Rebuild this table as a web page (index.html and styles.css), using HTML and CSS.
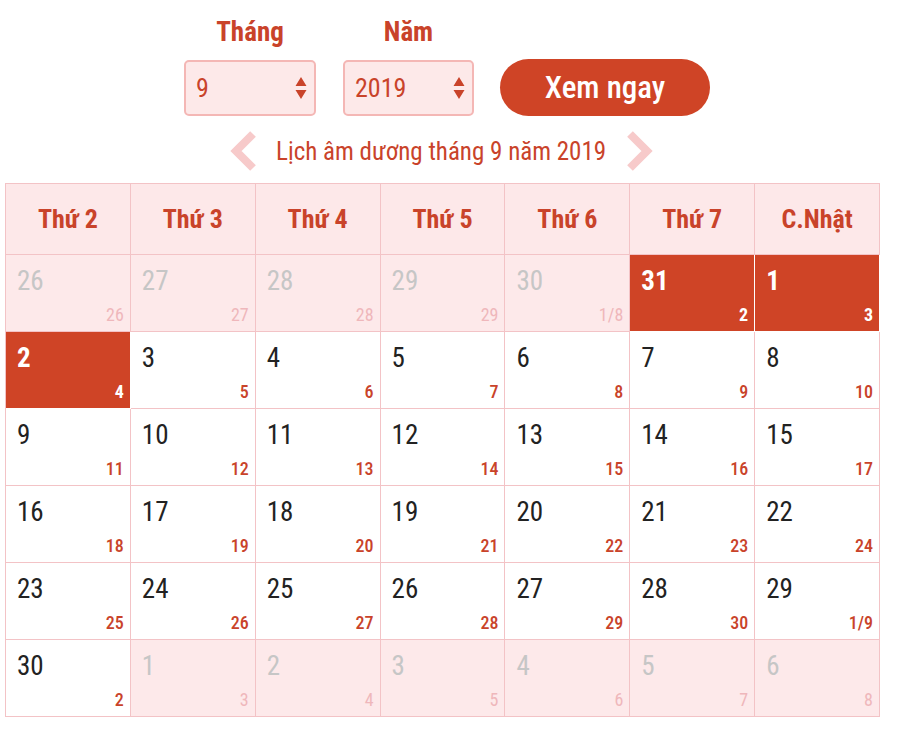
FILE: index.html
```html
<!DOCTYPE html>
<html lang="vi">
<head>
<meta charset="utf-8">
<link rel="stylesheet" href="styles.css">
</head>
<body>
<div class="page">
  <div class="controls">
    <div class="field">
      <div class="label">Tháng</div>
      <div class="select sel-month"><span>9</span>
        <svg class="spin" width="12" height="24" viewBox="0 0 12 24"><path d="M6 1 L11.5 10 H0.5 Z M6 23 L11.5 14 H0.5 Z" fill="#c9432a"/></svg>
      </div>
    </div>
    <div class="field">
      <div class="label">Năm</div>
      <div class="select sel-year"><span>2019</span>
        <svg class="spin" width="12" height="24" viewBox="0 0 12 24"><path d="M6 1 L11.5 10 H0.5 Z M6 23 L11.5 14 H0.5 Z" fill="#c9432a"/></svg>
      </div>
    </div>
    <div class="btn">Xem ngay</div>
  </div>
  <div class="titlebar">
    <svg class="chev" width="34" height="42" viewBox="0 0 34 42"><polyline points="27,4 10,21 27,38" fill="none" stroke="#f7caca" stroke-width="8"/></svg>
    <div class="title">Lịch âm dương tháng 9 năm 2019</div>
    <svg class="chev" width="34" height="42" viewBox="0 0 34 42"><polyline points="7,4 24,21 7,38" fill="none" stroke="#f7caca" stroke-width="8"/></svg>
  </div>
  <div class="cal">
    <div class="hd">Thứ 2</div><div class="hd">Thứ 3</div><div class="hd">Thứ 4</div><div class="hd">Thứ 5</div><div class="hd">Thứ 6</div><div class="hd">Thứ 7</div><div class="hd">C.Nhật</div>

    <div class="c off"><span class="d">26</span><span class="l">26</span></div>
    <div class="c off"><span class="d">27</span><span class="l">27</span></div>
    <div class="c off"><span class="d">28</span><span class="l">28</span></div>
    <div class="c off"><span class="d">29</span><span class="l">29</span></div>
    <div class="c off"><span class="d">30</span><span class="l">1/8</span></div>
    <div class="c hot"><span class="d">31</span><span class="l">2</span></div>
    <div class="c hot"><span class="d">1</span><span class="l">3</span></div>

    <div class="c hot"><span class="d">2</span><span class="l">4</span></div>
    <div class="c"><span class="d">3</span><span class="l">5</span></div>
    <div class="c"><span class="d">4</span><span class="l">6</span></div>
    <div class="c"><span class="d">5</span><span class="l">7</span></div>
    <div class="c"><span class="d">6</span><span class="l">8</span></div>
    <div class="c"><span class="d">7</span><span class="l">9</span></div>
    <div class="c"><span class="d">8</span><span class="l">10</span></div>

    <div class="c"><span class="d">9</span><span class="l">11</span></div>
    <div class="c"><span class="d">10</span><span class="l">12</span></div>
    <div class="c"><span class="d">11</span><span class="l">13</span></div>
    <div class="c"><span class="d">12</span><span class="l">14</span></div>
    <div class="c"><span class="d">13</span><span class="l">15</span></div>
    <div class="c"><span class="d">14</span><span class="l">16</span></div>
    <div class="c"><span class="d">15</span><span class="l">17</span></div>

    <div class="c"><span class="d">16</span><span class="l">18</span></div>
    <div class="c"><span class="d">17</span><span class="l">19</span></div>
    <div class="c"><span class="d">18</span><span class="l">20</span></div>
    <div class="c"><span class="d">19</span><span class="l">21</span></div>
    <div class="c"><span class="d">20</span><span class="l">22</span></div>
    <div class="c"><span class="d">21</span><span class="l">23</span></div>
    <div class="c"><span class="d">22</span><span class="l">24</span></div>

    <div class="c"><span class="d">23</span><span class="l">25</span></div>
    <div class="c"><span class="d">24</span><span class="l">26</span></div>
    <div class="c"><span class="d">25</span><span class="l">27</span></div>
    <div class="c"><span class="d">26</span><span class="l">28</span></div>
    <div class="c"><span class="d">27</span><span class="l">29</span></div>
    <div class="c"><span class="d">28</span><span class="l">30</span></div>
    <div class="c"><span class="d">29</span><span class="l">1/9</span></div>

    <div class="c"><span class="d">30</span><span class="l">2</span></div>
    <div class="c off"><span class="d">1</span><span class="l">3</span></div>
    <div class="c off"><span class="d">2</span><span class="l">4</span></div>
    <div class="c off"><span class="d">3</span><span class="l">5</span></div>
    <div class="c off"><span class="d">4</span><span class="l">6</span></div>
    <div class="c off"><span class="d">5</span><span class="l">7</span></div>
    <div class="c off"><span class="d">6</span><span class="l">8</span></div>
  </div>
</div>
</body>
</html>
```

FILE: styles.css
```css
* { box-sizing: border-box; }
html, body { margin: 0; padding: 0; background: #fff; }
body { font-family: Roboto, "Noto Sans", "Liberation Sans", sans-serif; font-stretch: condensed; }
.page { width: 900px; height: 730px; padding-top: 15px; }

.controls { display: flex; align-items: flex-end; padding-left: 184px; }
.field { display: flex; flex-direction: column; align-items: center; margin-right: 27px; }
.label { font-size: 27px; font-weight: 700; color: #c9432a; line-height: 34px; margin-bottom: 11px; }
.select { height: 56px; border: 2px solid #f4b7b5; border-radius: 5px; background: #fde9e9; display: flex; align-items: center; justify-content: space-between; padding: 0 7px 0 10px; font-size: 26px; color: #c9432a; }
.sel-month { width: 132px; }
.sel-year { width: 131px; }
.btn { width: 210px; height: 57px; margin-left: -1px; border-radius: 29px; background: #cf4426; color: #fff; font-size: 31px; font-weight: 500; display: flex; align-items: center; justify-content: center; }

.titlebar { display: flex; align-items: center; padding-left: 226px; margin-top: 13px; height: 44px; }
.title { font-size: 25px; color: #c9432a; margin: 0 17px 0 16px; }
.chev { display: block; }

.cal { margin: 10px 0 0 5px; width: 875px; display: grid; grid-template-columns: repeat(7, 1fr); grid-template-rows: 71px repeat(6, 77px); border-top: 1px solid #f3c3c6; border-left: 1px solid #f3c3c6; }
.hd, .c { border-right: 1px solid #f3c3c6; border-bottom: 1px solid #f3c3c6; }
.hd { background: #fde8e9; display: flex; align-items: center; justify-content: center; font-size: 26px; font-weight: 700; color: #c9432a; }
.c { background: #fff; display: flex; flex-direction: column; justify-content: space-between; padding: 11px 6px 6px 11px; }
.d { font-size: 27px; color: #222; line-height: 30px; }
.l { align-self: flex-end; font-size: 18px; font-weight: 500; color: #c9432a; line-height: 20px; }
.off { background: #fde9ea; }
.off .d { color: #c6c6c6; }
.off .l { color: #efb7bb; font-weight: 400; }
.hot { background: #cf4426; border-color: #fff; }
.hot .d { color: #fff; font-weight: 700; }
.hot .l { color: #fff; font-weight: 700; }
```
